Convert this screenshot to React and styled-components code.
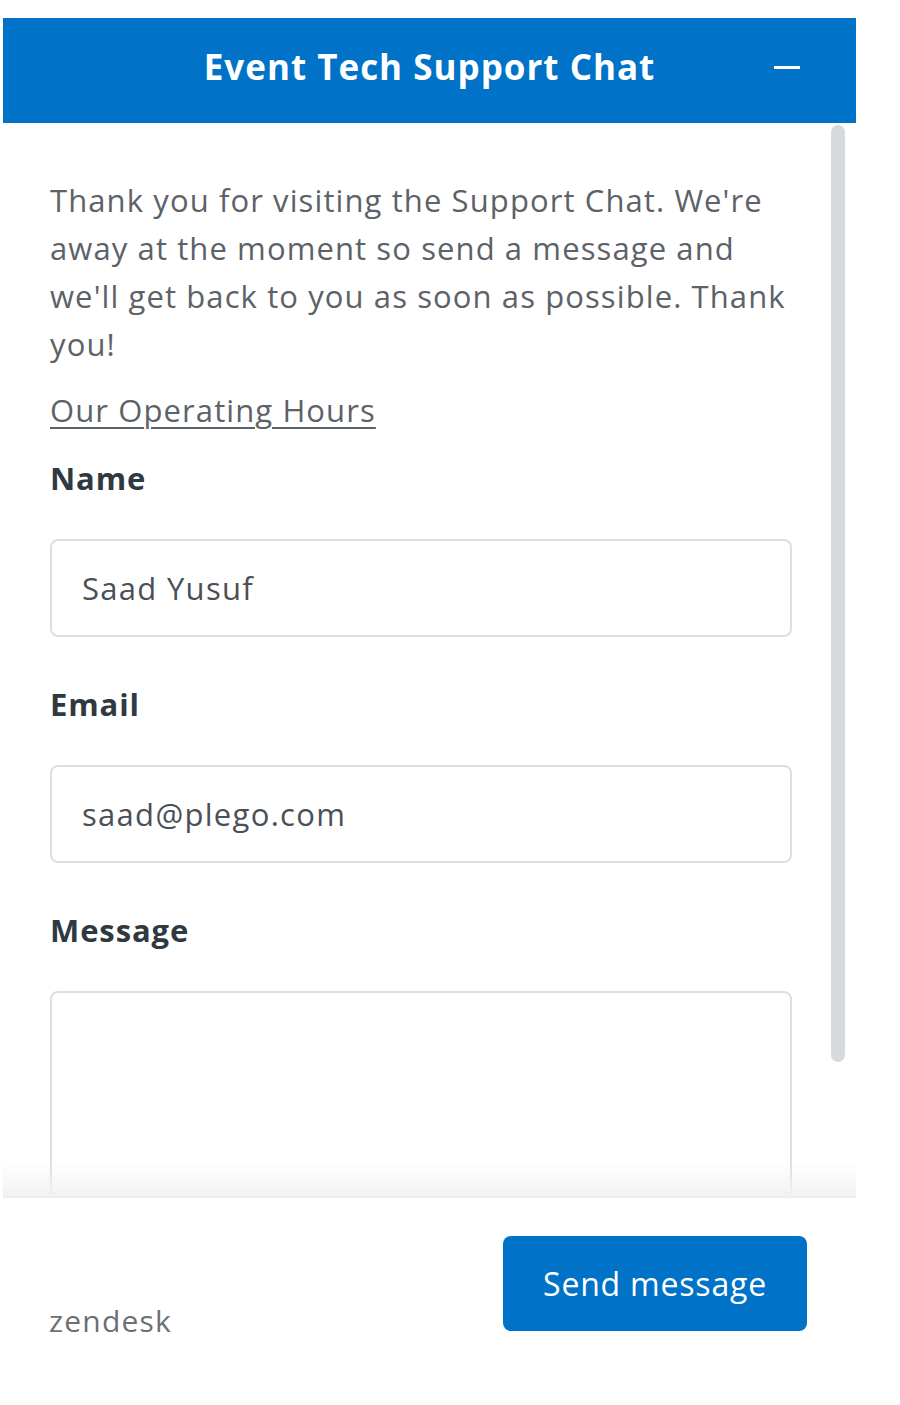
import React from 'react'
import styled, { createGlobalStyle } from 'styled-components'

const GlobalStyle = createGlobalStyle`
	html, body {
		margin: 0;
		padding: 0;
		background: #ffffff;
	}
	body {
		font-family: 'Open Sans', 'Noto Sans', sans-serif;
	}
`

const Widget = styled.div`
	width: 853px;
	margin: 18px 0 0 3px;
	display: flex;
	flex-direction: column;
	background: #ffffff;
`

const Header = styled.div`
	height: 105px;
	box-sizing: border-box;
	padding-bottom: 8px;
	background: #0073c8;
	display: flex;
	align-items: center;
	justify-content: center;
	position: relative;
`

const Title = styled.h1`
	margin: 0;
	color: #ffffff;
	font-size: 35px;
	font-weight: 700;
	letter-spacing: 1px;
`

const Minimize = styled.button`
	position: absolute;
	right: 54px;
	top: 50%;
	transform: translateY(-60%);
	width: 30px;
	height: 30px;
	border: none;
	background: transparent;
	padding: 0;
	display: flex;
	align-items: center;
	justify-content: center;

	span {
		display: block;
		width: 26px;
		height: 3px;
		background: #ffffff;
	}
`

const Scroller = styled.div`
	height: 1075px;
	overflow: hidden;
	position: relative;
`

const Content = styled.div`
	padding: 0 64px 0 47px;
	display: flex;
	flex-direction: column;
`

const Intro = styled.p`
	margin: 53px 0 0;
	font-size: 31px;
	line-height: 48px;
	letter-spacing: 1.1px;
	color: #5c6268;
`

const Hours = styled.a`
	margin-top: 22px;
	font-size: 31px;
	line-height: 40px;
	letter-spacing: 1.1px;
	color: #5c6268;
	text-decoration: underline;
	text-underline-offset: 5px;
	text-decoration-thickness: 2px;
	align-self: flex-start;
`

const Label = styled.label`
	margin-top: ${p => p.$first ? '28px' : '47px'};
	font-size: 31px;
	line-height: 40px;
	font-weight: 700;
	letter-spacing: 0.9px;
	color: #2f3941;
`

const Input = styled.div`
	margin-top: 41px;
	height: ${p => p.$tall ? '260px' : '98px'};
	box-sizing: border-box;
	border: 2px solid #dcdfe1;
	border-radius: 8px;
	padding: ${p => p.$tall ? '0' : '0 30px'};
	display: flex;
	align-items: center;
	font-size: 31px;
	letter-spacing: 1.3px;
	color: #4a5056;
`

const ScrollThumb = styled.div`
	position: absolute;
	right: 11px;
	top: 2px;
	width: 14px;
	height: 937px;
	border-radius: 7px;
	background: #d7dadd;
`

const Fade = styled.div`
	position: absolute;
	left: 0;
	right: 0;
	bottom: 0;
	height: 34px;
	background: linear-gradient(to bottom, rgba(244, 245, 246, 0), rgba(240, 241, 242, 1));
	border-bottom: 1px solid #e9ebec;
`

const Footer = styled.div`
	height: 167px;
	display: flex;
	align-items: flex-start;
	justify-content: space-between;
	padding: 38px 49px 0 46px;
	box-sizing: border-box;
`

const Brand = styled.span`
	margin-top: 64px;
	font-size: 30px;
	letter-spacing: 1.2px;
	color: #6b7075;
`

const SendButton = styled.button`
	width: 304px;
	height: 95px;
	border: none;
	border-radius: 8px;
	background: #0073c8;
	color: #ffffff;
	font-family: inherit;
	font-size: 32px;
	letter-spacing: 0.8px;
`

export default function App() {
	return (
		<>
			<GlobalStyle />
			<Widget>
				<Header>
					<Title>Event Tech Support Chat</Title>
					<Minimize aria-label='Minimize'>
						<span />
					</Minimize>
				</Header>
				<Scroller>
					<Content>
						<Intro>
							Thank you for visiting the Support Chat. We're away at the moment so send a message and we'll get back to you as soon as possible. Thank you!
						</Intro>
						<Hours href='#'>Our Operating Hours</Hours>
						<Label $first>Name</Label>
						<Input>Saad Yusuf</Input>
						<Label>Email</Label>
						<Input>saad@plego.com</Input>
						<Label>Message</Label>
						<Input $tall />
					</Content>
					<ScrollThumb />
					<Fade />
				</Scroller>
				<Footer>
					<Brand>zendesk</Brand>
					<SendButton>Send message</SendButton>
				</Footer>
			</Widget>
		</>
	)
}
